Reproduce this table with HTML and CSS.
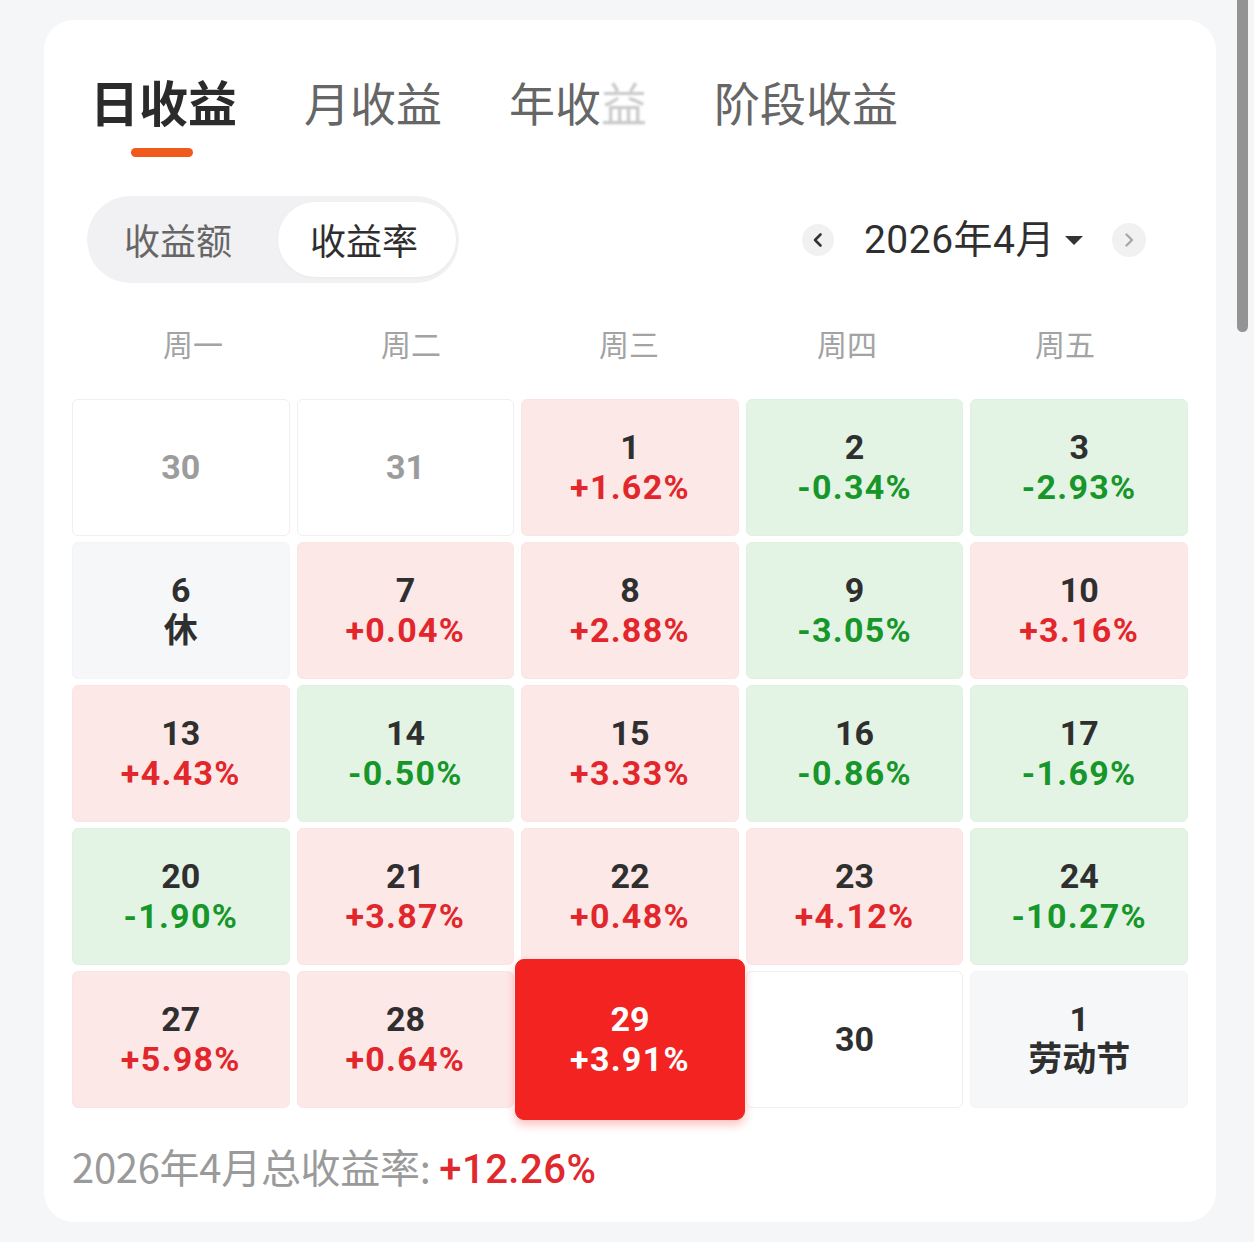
FILE: index.html
```html
<!DOCTYPE html>
<html lang="zh-CN">
<head>
<meta charset="utf-8">
<title>日收益</title>
<link rel="stylesheet" href="styles.css">
</head>
<body>
<div class="scrollbar"></div>
<main class="card">
  <nav class="tabs">
    <div class="tab active">日收益<span class="underline"></span></div>
    <div class="tab">月收益</div>
    <div class="tab">年收<span class="masked">益</span></div>
    <div class="tab">阶段收益</div>
  </nav>

  <div class="toolbar">
    <div class="toggle">
      <span class="seg">收益额</span>
      <span class="seg on">收益率</span>
    </div>
    <div class="month-nav">
      <span class="circle">
        <svg width="12" height="16" viewBox="0 0 12 16"><path d="M8.5 2.5 L3 8 L8.5 13.5" fill="none" stroke="#333" stroke-width="2.6" stroke-linecap="round" stroke-linejoin="round"/></svg>
      </span>
      <span class="month">2026年4月</span>
      <span class="caret"></span>
      <span class="circle next">
        <svg width="12" height="16" viewBox="0 0 12 16"><path d="M3.5 2.5 L9 8 L3.5 13.5" fill="none" stroke="#a8a8a8" stroke-width="2.4" stroke-linecap="round" stroke-linejoin="round"/></svg>
      </span>
    </div>
  </div>

  <div class="week">
    <span>周一</span><span>周二</span><span>周三</span><span>周四</span><span>周五</span>
  </div>

  <div class="grid">
    <div class="cell other"><b class="muted">30</b></div>
    <div class="cell other"><b class="muted">31</b></div>
    <div class="cell up"><b>1</b><i>+1.62%</i></div>
    <div class="cell down"><b>2</b><i>-0.34%</i></div>
    <div class="cell down"><b>3</b><i>-2.93%</i></div>

    <div class="cell rest"><b>6</b><b>休</b></div>
    <div class="cell up"><b>7</b><i>+0.04%</i></div>
    <div class="cell up"><b>8</b><i>+2.88%</i></div>
    <div class="cell down"><b>9</b><i>-3.05%</i></div>
    <div class="cell up"><b>10</b><i>+3.16%</i></div>

    <div class="cell up"><b>13</b><i>+4.43%</i></div>
    <div class="cell down"><b>14</b><i>-0.50%</i></div>
    <div class="cell up"><b>15</b><i>+3.33%</i></div>
    <div class="cell down"><b>16</b><i>-0.86%</i></div>
    <div class="cell down"><b>17</b><i>-1.69%</i></div>

    <div class="cell down"><b>20</b><i>-1.90%</i></div>
    <div class="cell up"><b>21</b><i>+3.87%</i></div>
    <div class="cell up"><b>22</b><i>+0.48%</i></div>
    <div class="cell up"><b>23</b><i>+4.12%</i></div>
    <div class="cell down"><b>24</b><i>-10.27%</i></div>

    <div class="cell up"><b>27</b><i>+5.98%</i></div>
    <div class="cell up"><b>28</b><i>+0.64%</i></div>
    <div class="cell today"><b>29</b><i>+3.91%</i></div>
    <div class="cell other"><b>30</b></div>
    <div class="cell rest"><b>1</b><b>劳动节</b></div>
  </div>

  <p class="total">2026年4月总收益率: <span class="total-val">+12.26%</span></p>
</main>
</body>
</html>
```

FILE: styles.css
```css
* { box-sizing: border-box; }

html, body {
  margin: 0;
  padding: 0;
}

body {
  background: #f5f6f8;
  font-family: Roboto, "Noto Sans", "Noto Sans CJK SC", sans-serif;
  color: #333;
  width: 1254px;
  height: 1242px;
  overflow: hidden;
}

.scrollbar {
  position: fixed;
  top: 0;
  left: 1237px;
  width: 11px;
  height: 332px;
  background: #949494;
  border-radius: 0 0 6px 6px;
}

.card {
  margin: 20px 0 0 44px;
  width: 1172px;
  height: 1202px;
  background: #fff;
  border-radius: 30px;
  padding: 53px 28px 0 28px;
}

/* tabs */
.tabs {
  display: flex;
  align-items: flex-start;
  gap: 67px;
  padding-left: 18px;
  height: 84px;
}

.tab {
  position: relative;
  font-family: "Noto Sans CJK SC", sans-serif;
  font-size: 46px;
  line-height: 56px;
  color: #666;
  white-space: nowrap;
}

.tab.active {
  font-size: 49px;
  font-weight: 700;
  color: #2b2b2b;
}

.masked {
  color: #c9c9c9;
  filter: blur(1.2px);
}

.underline {
  position: absolute;
  left: 41px;
  top: 75px;
  width: 62px;
  height: 9px;
  border-radius: 5px;
  background: #f05a1c;
}

/* toolbar */
.toolbar {
  margin-top: 39px;
  display: flex;
  align-items: center;
  justify-content: space-between;
  padding-left: 15px;
  padding-right: 42px;
}

.toggle {
  display: flex;
  align-items: center;
  height: 87px;
  padding: 6px 3px 6px 0;
  background: #f1f1f4;
  border-radius: 44px;
}

.seg {
  font-family: "Noto Sans CJK SC", sans-serif;
  font-size: 36px;
  line-height: 75px;
  color: #666;
  padding: 0 39px 0 37px;
  width: 191px;
}

.seg.on {
  width: 178px;
  height: 75px;
  padding: 0 0 0 32px;
  color: #2e2e2e;
  background: #fff;
  border-radius: 38px;
  box-shadow: 0 1px 3px rgba(0,0,0,0.04);
}

.month-nav {
  display: flex;
  align-items: center;
}

.circle {
  width: 32px;
  height: 32px;
  border-radius: 50%;
  background: #f1f1f1;
  display: flex;
  align-items: center;
  justify-content: center;
}

.circle.next {
  width: 34px;
  height: 34px;
  margin-left: 29px;
}

.month {
  margin-left: 30px;
  font-family: Roboto, "Noto Sans CJK SC", sans-serif;
  font-size: 39px;
  line-height: 50px;
  color: #2f2f2f;
  letter-spacing: 0.5px;
}

.caret {
  margin-left: 10px;
  width: 0;
  height: 0;
  border-left: 9px solid transparent;
  border-right: 9px solid transparent;
  border-top: 9px solid #333;
  margin-top: 2px;
}

/* week header */
.week {
  margin-top: 40px;
  display: grid;
  grid-template-columns: repeat(5, 1fr);
  padding: 0 14px 0 12px;
}

.week span {
  text-align: center;
  font-family: "Noto Sans CJK SC", sans-serif;
  font-size: 30px;
  line-height: 40px;
  color: #a3a3a3;
}

/* grid */
.grid {
  margin-top: 36px;
  display: grid;
  grid-template-columns: repeat(5, 1fr);
  grid-auto-rows: 137px;
  column-gap: 7px;
  row-gap: 6px;
  width: 1116px;
}

.cell {
  display: flex;
  flex-direction: column;
  align-items: center;
  justify-content: center;
  border-radius: 6px;
  border: 1px solid transparent;
  font-family: Roboto, "Noto Sans CJK SC", sans-serif;
  font-size: 34px;
  line-height: 40px;
  padding-bottom: 2px;
}

.cell b {
  font-weight: 700;
  color: #2f2f2f;
}

.cell i {
  font-style: normal;
  font-weight: 700;
  letter-spacing: 1.3px;
}

.cell b.muted { color: #9c9c9c; }

.cell.other {
  background: #fff;
  border-color: #efefef;
}

.cell.rest {
  background: #f6f7f9;
  border-color: #f3f4f6;
}

.cell.up {
  background: #fde8e8;
  border-color: #fbe4e4;
}
.cell.up i { color: #e1272b; }

.cell.down {
  background: #e3f4e5;
  border-color: #dff1e1;
}
.cell.down i { color: #17962a; }

.cell.today {
  position: relative;
  z-index: 1;
  margin: -12px -6px;
  padding-bottom: 2px;
  background: #f22320;
  border-color: #f22320;
  border-radius: 9px;
  box-shadow: 0 5px 10px rgba(240, 40, 35, 0.28);
}
.cell.today b,
.cell.today i { color: #fff; }

/* footer */
.total {
  margin: 34px 0 0 0;
  font-family: "Noto Sans CJK SC", sans-serif;
  font-size: 40px;
  line-height: 48px;
  color: #9a9a9a;
  letter-spacing: -0.3px;
}

.total-val {
  color: #e0282d;
  font-family: Roboto, "Noto Sans CJK SC", sans-serif;
  font-weight: 500;
  letter-spacing: 0.5px;
}
```
